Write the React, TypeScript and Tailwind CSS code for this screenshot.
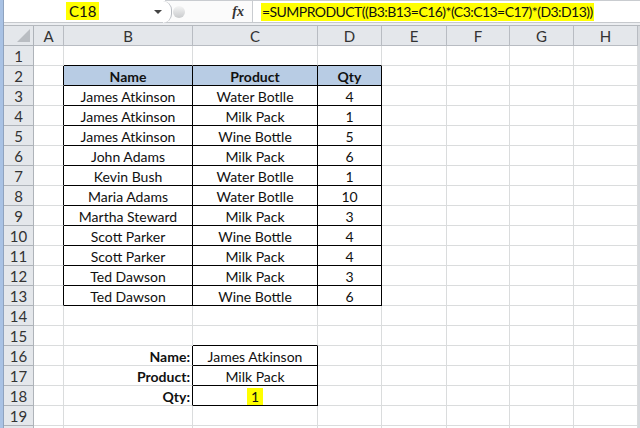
import React from "react";

const columns = ["A", "B", "C", "D", "E", "F", "G", "H"];

const data: [string, string, string][] = [
    ["James Atkinson", "Water Botlle", "4"],
    ["James Atkinson", "Milk Pack", "1"],
    ["James Atkinson", "Wine Bottle", "5"],
    ["John Adams", "Milk Pack", "6"],
    ["Kevin Bush", "Water Botlle", "1"],
    ["Maria Adams", "Water Botlle", "10"],
    ["Martha Steward", "Milk Pack", "3"],
    ["Scott Parker", "Wine Bottle", "4"],
    ["Scott Parker", "Milk Pack", "4"],
    ["Ted Dawson", "Milk Pack", "3"],
    ["Ted Dawson", "Wine Bottle", "6"],
];

const rows = Array.from({ length: 20 }, (_, i) => i + 1);

// work out what goes in a cell and which of its edges are drawn black
const cellInfo = (row: number, col: number) => {
    const inTable = row >= 2 && row <= 13 && col >= 1 && col <= 3;
    const inBox = row >= 16 && row <= 18 && col === 2;

    const rightBlack =
        inTable || inBox || (col === 0 && row >= 2 && row <= 13) || (col === 1 && row >= 16 && row <= 18);
    const bottomBlack = inTable || inBox || (row === 1 && col >= 1 && col <= 3) || (row === 15 && col === 2);

    let text: React.ReactNode = "";
    let bold = false;
    let align = "justify-center";
    let bg = "bg-white";

    if (row === 2 && col >= 1 && col <= 3) {
        text = ["Name", "Product", "Qty"][col - 1];
        bold = true;
        bg = "bg-[#b8cce4]";
    } else if (row >= 3 && row <= 13 && col >= 1 && col <= 3) {
        text = data[row - 3][col - 1];
    } else if (row >= 16 && row <= 18 && col === 1) {
        text = ["Name:", "Product:", "Qty:"][row - 16];
        bold = true;
        align = "justify-end pr-[2px]";
    } else if (row === 16 && col === 2) {
        text = "James Atkinson";
    } else if (row === 17 && col === 2) {
        text = "Milk Pack";
    } else if (row === 18 && col === 2) {
        text = <span className="bg-[#ffff00] px-[4px] leading-[17px]">1</span>;
    }

    return { text, bold, align, bg, rightBlack, bottomBlack };
};

const App = () => {
    return (
        <div
            className="flex h-[428px] w-[640px] overflow-hidden bg-white text-[14px] text-[#111]"
            style={{ fontFamily: "Lato, 'Liberation Sans', sans-serif" }}
        >
            {/* window frame on the left */}
            <div className="w-[3px] shrink-0 bg-[#a9c2e4]" />
            <div className="w-[1px] shrink-0 bg-[#8fa3bf]" />

            <div className="flex min-w-0 flex-1 flex-col">
                {/* formula bar */}
                <div className="flex h-[23px] shrink-0 border-b border-[#c6c9cd] text-[15px]">
                    <div className="relative flex w-[161px] items-center bg-white">
                        <span className="ml-[62px] bg-[#ffff00] px-[3px] leading-[18px]">C18</span>
                        <svg className="absolute right-[3px] top-[10px]" width="8" height="5" viewBox="0 0 8 5">
                            <polygon points="0,0 8,0 4,4" fill="#444" />
                        </svg>
                    </div>
                    <div className="relative flex w-[87px] items-center border-t border-[#c9ccd0] bg-[#fbfbfb]">
                        <div className="absolute -left-[2px] top-0 h-[22px] w-[9px] rounded-r-full border-r border-[#b7bbc1] bg-white" />
                        <div className="absolute left-[8px] top-[5px] h-[12px] w-[12px] rounded-full bg-gradient-to-b from-[#f4f4f4] to-[#c9cbcd]" />
                        <span
                            className="ml-auto mr-[8px] text-[14px] font-bold italic text-[#333]"
                            style={{ fontFamily: "'Liberation Serif', serif" }}
                        >
                            fx
                        </span>
                    </div>
                    <div className="flex min-w-0 flex-1 items-center overflow-hidden border-l border-t border-[#c9ccd0] bg-white pl-[8px]">
                        <span className="whitespace-nowrap bg-[#ffff00] px-[1px] text-[14px] leading-[18px] tracking-[-0.55px]">
                            =SUMPRODUCT((B3:B13=C16)*(C3:C13=C17)*(D3:D13))
                        </span>
                    </div>
                </div>
                <div className="h-[3px] shrink-0 border-b border-[#b5b9be] bg-[#eceef1]" />

                {/* sheet */}
                <div className="flex">
                    <div className="grid grid-cols-[30px_30px_129px_125px_64px_65px_63px_64px_64px] auto-rows-[20px]">
                        {/* column headers */}
                        <div className="relative border-b border-r border-[#aeb3b9] bg-[#e4e7eb]">
                            <svg className="absolute bottom-[3px] right-[3px]" width="13" height="13" viewBox="0 0 13 13">
                                <polygon points="13,0 13,13 0,13" fill="#b9bdc2" />
                            </svg>
                        </div>
                        {columns.map((c) => (
                            <div
                                key={c}
                                className="flex items-center justify-center border-b border-r border-[#b8bcc2] bg-[#e4e7eb] pt-[2px] text-[15px] text-[#333]"
                            >
                                {c}
                            </div>
                        ))}

                        {rows.map((r) => (
                            <React.Fragment key={r}>
                                <div className="flex items-center justify-center border-b border-r border-[#aeb3b9] bg-[#e4e7eb] pt-[2px] text-[15px] text-[#333]">
                                    {r < 20 ? r : ""}
                                </div>
                                {columns.map((_, ci) => {
                                    const cell = cellInfo(r, ci);
                                    return (
                                        <div
                                            key={ci}
                                            className={`flex items-center whitespace-nowrap border-b border-r pt-[2px] ${cell.align} ${cell.bg} ${
                                                cell.rightBlack ? "border-r-black" : "border-r-[#dadcdd]"
                                            } ${cell.bottomBlack ? "border-b-black" : "border-b-[#dadcdd]"} ${
                                                cell.bold ? "font-bold" : ""
                                            }`}
                                        >
                                            {cell.text}
                                        </div>
                                    );
                                })}
                            </React.Fragment>
                        ))}
                    </div>
                    <div className="w-[2px] shrink-0 bg-[#d6d9dd]" />
                </div>
            </div>
        </div>
    );
};

export default App;
